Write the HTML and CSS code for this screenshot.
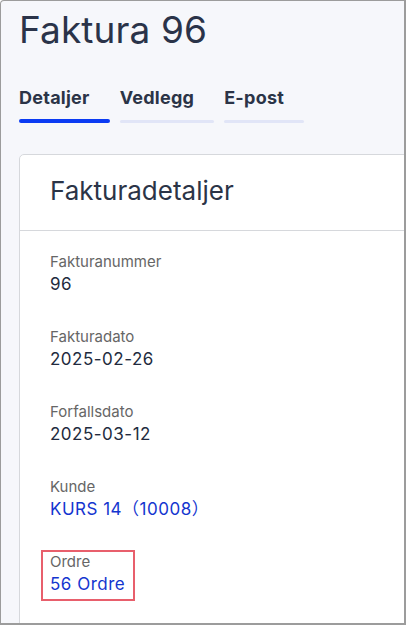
FILE: index.html
```html
<!DOCTYPE html>
<html>
<head>
<meta charset="utf-8">
<link rel="stylesheet" href="styles.css">
</head>
<body>

<div class="frame">

  <h1 class="page-title">Faktura 96</h1>

  <div class="tabs">
    <div class="tab active">
      <span class="tab-label">Detaljer</span>
      <span class="tab-bar"></span>
    </div>
    <div class="tab">
      <span class="tab-label">Vedlegg</span>
      <span class="tab-bar"></span>
    </div>
    <div class="tab">
      <span class="tab-label">E-post</span>
      <span class="tab-bar"></span>
    </div>
  </div>

  <div class="card">
    <div class="card-header">
      <h2>Fakturadetaljer</h2>
    </div>
    <div class="card-body">
      <div class="field">
        <div class="field-label">Fakturanummer</div>
        <div class="field-value">96</div>
      </div>
      <div class="field">
        <div class="field-label">Fakturadato</div>
        <div class="field-value">2025-02-26</div>
      </div>
      <div class="field">
        <div class="field-label">Forfallsdato</div>
        <div class="field-value">2025-03-12</div>
      </div>
      <div class="field">
        <div class="field-label">Kunde</div>
        <div class="field-value"><a href="#">KURS 14（10008）</a></div>
      </div>
      <div class="field">
        <div class="highlight">
          <div class="field-label">Ordre</div>
          <div class="field-value"><a href="#">56 Ordre</a></div>
        </div>
      </div>
    </div>
  </div>

</div>

</body>
</html>
```

FILE: styles.css
```css
body {
  margin: 0;
  font-family: Inter, "Noto Sans", "Noto Sans CJK SC", sans-serif;
}

.frame {
  box-sizing: border-box;
  width: 406px;
  height: 625px;
  overflow: hidden;
  background-color: #f6f7fb;
  border-style: solid;
  border-color: #9c9c9c;
  border-width: 1px 2px 2px 1px;
  border-top-left-radius: 4px;
  padding: 7px 0 0 18px;
}

.page-title {
  margin: 0;
  font-size: 37px;
  line-height: 44px;
  font-weight: 400;
  color: #2a3349;
  letter-spacing: 0.1px;
}

/* tabs */
.tabs {
  display: flex;
  gap: 10px;
  margin-top: 34px;
}

.tab {
  display: flex;
  flex-direction: column;
}

.tab-label {
  font-size: 18px;
  line-height: 24px;
  font-weight: 700;
  color: #2b3447;
  letter-spacing: 0.25px;
  padding-right: 20px;
}

.tab-bar {
  margin-top: 10px;
  height: 3px;
  border-radius: 2px;
  background-color: #e1e5f7;
}

.tab.active .tab-bar {
  margin-top: 9px;
  height: 4px;
  background-color: #0b3bf3;
}

/* card */
.card {
  margin-top: 31px;
  margin-right: -20px;
  background-color: white;
  border: 1px solid #d6d8dc;
  border-top-left-radius: 5px;
}

.card-header {
  padding: 20px 30px 23px;
  border-bottom: 1px solid #d6d8dc;
}

.card-header h2 {
  margin: 0;
  font-size: 26px;
  line-height: 32px;
  font-weight: 400;
  color: #2b3447;
}

.card-body {
  padding: 21px 30px 40px;
}

.field {
  margin-bottom: 31px;
}

.field-label {
  font-size: 15px;
  line-height: 20px;
  color: #666666;
}

.field-value {
  font-size: 17px;
  line-height: 24px;
  font-weight: 400;
  letter-spacing: 0.5px;
  color: #222b3e;
}

.field-value a {
  color: #1435cf;
  text-decoration: none;
}

.highlight {
  display: inline-block;
  border: 2px solid #e85f6c;
  margin: -2px -10px -5px -9px;
  padding: 0 8px 3px 7px;
}
```
